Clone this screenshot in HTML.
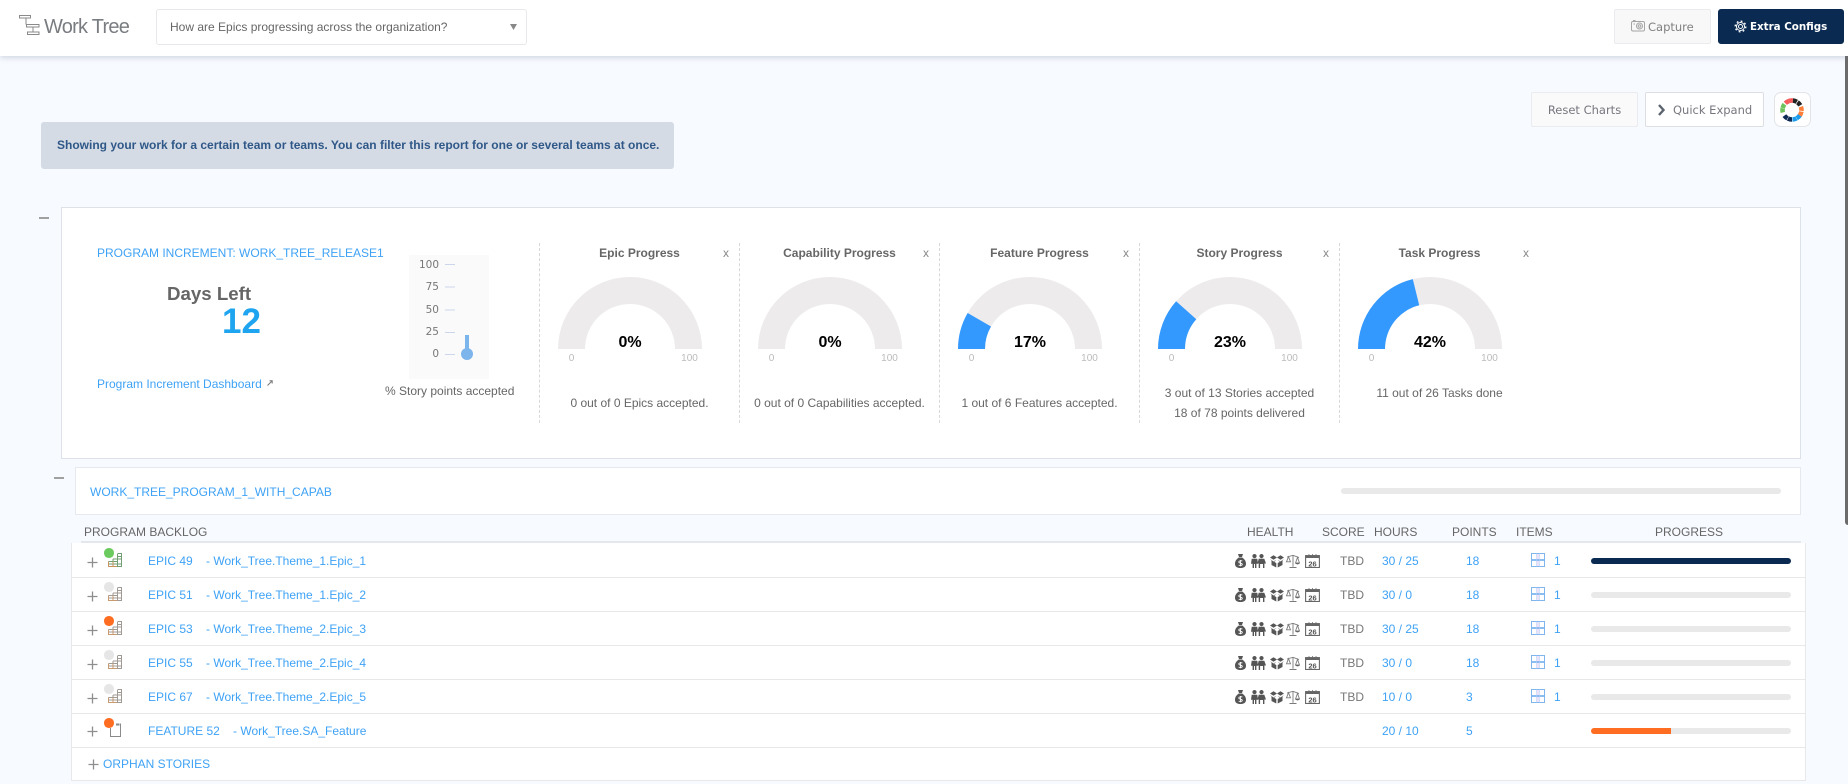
<!DOCTYPE html>
<html><head><meta charset="utf-8"><title>Work Tree</title>
<style>
html,body{margin:0;padding:0;width:1848px;height:784px;overflow:hidden;background:#f7faff;font-family:"Liberation Sans",sans-serif;font-size:12px;color:#666}
.a{position:absolute;white-space:nowrap;line-height:20px}
.b{position:absolute;box-sizing:border-box}
.l{color:#3ea2f5}
.c{transform:translateX(-50%)}
.btn{position:absolute;box-sizing:border-box;top:92px;height:35px;border:1px solid #e9ebee;border-radius:2px;background:#fafafa;font-family:"DejaVu Sans",sans-serif;font-size:11.5px;color:#77777f;line-height:35px}
.bar{position:absolute;left:1591px;width:200px;height:6px;border-radius:3px;background:#e9e9e9;overflow:hidden}
svg{position:absolute;overflow:visible}
.t{font-size:10px;color:#bbb}
.p{font-size:16px;font-weight:bold;color:#000}
.d{font-family:"DejaVu Sans",sans-serif;font-size:10.5px;color:#777}
</style></head><body>

<!-- header -->
<div class="b" style="left:0;top:0;width:1848px;height:56px;background:#fff;box-shadow:0 2px 5px rgba(120,130,150,.28);z-index:2"></div>
<div style="position:absolute;left:0;top:0;z-index:3">
<svg style="left:0;top:0" width="60" height="50" fill="none" stroke="#8a8a8a" stroke-width="1"><rect x="19.5" y="15.5" width="11" height="2.5"/><path d="M26 18V24.5M33 27V32"/><rect x="26.5" y="24.5" width="12.5" height="2.5"/><rect x="27.5" y="32" width="11.5" height="2.5"/></svg>
<div class="a" style="left:44px;top:15px;font-size:20px;line-height:24px;color:#797c80;letter-spacing:-.75px">Work Tree</div>
<div class="b" style="left:156px;top:9px;width:371px;height:36px;border:1px solid #e8e8ec;border-radius:3px;background:#fff"></div>
<div class="a" style="left:170px;top:17px;color:#666">How are Epics progressing across the organization?</div>
<svg style="left:510px;top:24px" width="7" height="6"><path d="M0 0H7L3.5 6Z" fill="#888"/></svg>
<div class="btn" style="left:1614px;top:9px;width:97px;color:#808080;background:#f8f8f8;padding-left:33px">Capture</div>
<svg style="left:1631px;top:19px" width="14" height="14" fill="none" stroke="#a5a5a5" stroke-width="1"><rect x=".5" y="2.5" width="13" height="9.5" rx="1.5"/><circle cx="8.5" cy="7" r="3"/><circle cx="8.5" cy="7" r="1.3"/><path d="M2 1.5H4.5M2.500 5h1.500"/></svg>
<div class="btn" style="left:1718px;top:9px;width:126px;background:#0a2a52;border-color:#0a2a52;border-radius:3px;color:#fff;font-weight:bold;font-size:10.3px;padding-left:31px">Extra Configs</div>
<svg style="left:1734px;top:20px" width="13" height="13" fill="none" stroke="#fff"><circle cx="6.5" cy="6.5" r="4"/><circle cx="6.5" cy="6.5" r="2"/><circle cx="6.5" cy="6.5" r="5.3" stroke-width="1.4" stroke-dasharray="1.8 2.36"/></svg>
</div>

<!-- scrollbar -->
<div class="b" style="left:1845px;top:56px;width:3px;height:469px;background:#6b6b6b;border-radius:0 0 0 3px"></div>

<!-- toolbar -->
<div class="btn" style="left:1531px;width:107px;text-align:center">Reset Charts</div>
<div class="btn" style="left:1645px;width:119px;background:#fff;border-color:#dcdee2;padding-left:27px">Quick Expand</div>
<svg style="left:1657px;top:104px" width="9" height="12" fill="none" stroke="#5c6470" stroke-width="2.4"><path d="M2 1L6.5 6L2 11"/></svg>
<div class="btn" style="left:1774px;width:37px;background:#fff;border-color:#e2e4e8;border-radius:7px"></div>
<svg style="left:1780px;top:98px" width="24" height="24" viewBox="-12 -12 24 24" fill="none" stroke-width="4.6">
<g stroke-dasharray="4.2 55.5">
<circle r="9.5" stroke="#222" transform="rotate(-85)"/><circle r="9.5" stroke="#222" transform="rotate(-55)"/><circle r="9.5" stroke="#ff7f3a" transform="rotate(-20)"/><circle r="9.5" stroke="#ff7f3a" transform="rotate(10)"/><circle r="9.5" stroke="#1c9cea" transform="rotate(35)"/><circle r="9.5" stroke="#1c9cea" transform="rotate(62)"/><circle r="9.5" stroke="#0d2c55" transform="rotate(90)"/><circle r="9.5" stroke="#0d2c55" transform="rotate(118)"/><circle r="9.5" stroke="#6cc35b" transform="rotate(165)"/><circle r="9.5" stroke="#6cc35b" transform="rotate(192)"/><circle r="9.5" stroke="#f65a5a" transform="rotate(225)"/><circle r="9.5" stroke="#f65a5a" transform="rotate(250)"/>
</g></svg>

<!-- alert -->
<div class="b" style="left:41px;top:122px;width:633px;height:47px;background:#d5dbe5;border-radius:3px"></div>
<div class="a" style="left:57px;top:135px;font-weight:bold;color:#2f5888;font-size:12px">Showing your work for a certain team or teams. You can filter this report for one or several teams at once.</div>

<!-- summary card -->
<div class="b" style="left:39px;top:217px;width:10px;height:2px;background:#a0a0a0"></div>
<div class="b" style="left:61px;top:207px;width:1740px;height:252px;background:#fff;border:1px solid #dde2e8"></div>
<div class="a l" style="left:97px;top:243px">PROGRAM INCREMENT: WORK_TREE_RELEASE1</div>
<div class="a" style="left:167px;top:284px;font-size:18.7px;font-weight:bold;color:#666">Days Left</div>
<div class="a" style="left:222px;top:312px;font-size:35px;font-weight:bold;color:#1fa5f0">12</div>
<div class="a l" style="left:97px;top:374px">Program Increment Dashboard</div>
<svg style="left:267px;top:380px" width="6" height="6" fill="none" stroke="#777"><path d="M.5 5.5L5 1M2.5 .8H5.200V3.500"/></svg>

<!-- thermometer -->
<div class="b" style="left:409px;top:255px;width:80px;height:124px;background:#fafafa"></div>
<div class="a d" style="right:1409px;top:255px">100</div>
<div class="a d" style="right:1409px;top:277px">75</div>
<div class="a d" style="right:1409px;top:300px">50</div>
<div class="a d" style="right:1409px;top:322px">25</div>
<div class="a d" style="right:1409px;top:344px">0</div>
<svg style="left:0;top:0" width="600" height="400"><path d="M445 264.5H455M445 287H455M445 310H455M445 332.500H455M445 354.500H455" stroke="#ccd6eb"/><rect x="465" y="335" width="4" height="18" fill="#7cb5ec"/><circle cx="467" cy="354" r="6" fill="#7cb5ec"/></svg>
<div class="a" style="left:385px;top:381px">% Story points accepted</div>

<!-- dividers -->
<div class="b" style="left:539px;top:243px;height:180px;border-left:1px dashed #d8d8d8"></div>
<div class="b" style="left:739px;top:243px;height:180px;border-left:1px dashed #d8d8d8"></div>
<div class="b" style="left:939px;top:243px;height:180px;border-left:1px dashed #d8d8d8"></div>
<div class="b" style="left:1139px;top:243px;height:180px;border-left:1px dashed #d8d8d8"></div>
<div class="b" style="left:1339px;top:243px;height:180px;border-left:1px dashed #d8d8d8"></div>

<!-- gauges -->
<svg style="left:0;top:0" width="1848" height="784">
<g fill="#edebec">
<path d="M558 349A72 72 0 0 1 702 349H675A45 45 0 0 0 585 349Z"/>
<path d="M758 349A72 72 0 0 1 902 349H875A45 45 0 0 0 785 349Z"/>
<path d="M958 349A72 72 0 0 1 1102 349H1075A45 45 0 0 0 985 349Z"/>
<path d="M1158 349A72 72 0 0 1 1302 349H1275A45 45 0 0 0 1185 349Z"/>
<path d="M1358 349A72 72 0 0 1 1502 349H1475A45 45 0 0 0 1385 349Z"/>
</g>
<g fill="#3399ff">
<path d="M958 349A72 72 0 0 1 967.65 313L991.03 326.5A45 45 0 0 0 985 349Z"/>
<path d="M1158 349A72 72 0 0 1 1176.1 301.3L1196.3 319.2A45 45 0 0 0 1185 349Z"/>
<path d="M1358 349A72 72 0 0 1 1412.8 279.1L1419.2 305.3A45 45 0 0 0 1385 349Z"/>
</g>
</svg>

<div class="a c" style="left:639.5px;top:243px;font-weight:bold">Epic Progress</div>
<div class="a c" style="left:839.5px;top:243px;font-weight:bold">Capability Progress</div>
<div class="a c" style="left:1039.5px;top:243px;font-weight:bold">Feature Progress</div>
<div class="a c" style="left:1239.5px;top:243px;font-weight:bold">Story Progress</div>
<div class="a c" style="left:1439.5px;top:243px;font-weight:bold">Task Progress</div>
<div class="a c" style="left:726px;top:243px;color:#888">x</div>
<div class="a c" style="left:926px;top:243px;color:#888">x</div>
<div class="a c" style="left:1126px;top:243px;color:#888">x</div>
<div class="a c" style="left:1326px;top:243px;color:#888">x</div>
<div class="a c" style="left:1526px;top:243px;color:#888">x</div>

<div class="a c p" style="left:630px;top:333px">0%</div>
<div class="a c p" style="left:830px;top:333px">0%</div>
<div class="a c p" style="left:1030px;top:333px">17%</div>
<div class="a c p" style="left:1230px;top:333px">23%</div>
<div class="a c p" style="left:1430px;top:333px">42%</div>

<div class="a c t" style="left:571.5px;top:348.5px">0</div><div class="a c t" style="left:689.5px;top:348.5px">100</div>
<div class="a c t" style="left:771.5px;top:348.5px">0</div><div class="a c t" style="left:889.5px;top:348.5px">100</div>
<div class="a c t" style="left:971.5px;top:348.5px">0</div><div class="a c t" style="left:1089.5px;top:348.5px">100</div>
<div class="a c t" style="left:1171.5px;top:348.5px">0</div><div class="a c t" style="left:1289.5px;top:348.5px">100</div>
<div class="a c t" style="left:1371.5px;top:348.5px">0</div><div class="a c t" style="left:1489.5px;top:348.5px">100</div>

<div class="a c" style="left:639.5px;top:393px">0 out of 0 Epics accepted.</div>
<div class="a c" style="left:839.5px;top:393px">0 out of 0 Capabilities accepted.</div>
<div class="a c" style="left:1039.5px;top:393px">1 out of 6 Features accepted.</div>
<div class="a c" style="left:1239.5px;top:383px">3 out of 13 Stories accepted</div>
<div class="a c" style="left:1239.5px;top:403px">18 of 78 points delivered</div>
<div class="a c" style="left:1439.5px;top:383px">11 out of 26 Tasks done</div>

<!-- program -->
<div class="b" style="left:54px;top:477px;width:10px;height:2px;background:#a0a0a0"></div>
<div class="b" style="left:75px;top:467px;width:1726px;height:48px;background:#fff;border:1px solid #e6e9ee"></div>
<div class="a l" style="left:90px;top:482px">WORK_TREE_PROGRAM_1_WITH_CAPAB</div>
<div class="b" style="left:1341px;top:488px;width:440px;height:6px;border-radius:3px;background:#e9e9e9"></div>

<div class="a" style="left:84px;top:522px">PROGRAM BACKLOG</div>
<div class="a" style="left:1247px;top:522px">HEALTH</div>
<div class="a" style="left:1322px;top:522px">SCORE</div>
<div class="a" style="left:1374px;top:522px">HOURS</div>
<div class="a" style="left:1452px;top:522px">POINTS</div>
<div class="a" style="left:1516px;top:522px">ITEMS</div>
<div class="a" style="left:1655px;top:522px">PROGRESS</div>
<div class="b" style="left:81px;top:541px;width:1720px;height:2px;background:#e4e7ec"></div>

<!-- rows box -->
<div class="b" style="left:71px;top:543px;width:1735px;height:238px;background:#fff;border:1px solid #e8e8ea;border-width:0 1px 1px 1px"></div>
<div class="b" style="left:72px;top:577px;width:1733px;height:1px;background:#e8e8e8"></div>
<div class="b" style="left:72px;top:611px;width:1733px;height:1px;background:#e8e8e8"></div>
<div class="b" style="left:72px;top:645px;width:1733px;height:1px;background:#e8e8e8"></div>
<div class="b" style="left:72px;top:679px;width:1733px;height:1px;background:#e8e8e8"></div>
<div class="b" style="left:72px;top:713px;width:1733px;height:1px;background:#e8e8e8"></div>
<div class="b" style="left:72px;top:747px;width:1733px;height:1px;background:#e8e8e8"></div>

<svg width="0" height="0" style="left:0;top:0">
<symbol id="plus" viewBox="0 0 11 11"><path d="M5.5 .5V10.5M.5 5.5H10.500" stroke="#8e8e8e" stroke-width="1.3" fill="none"/></symbol>
<symbol id="ep" viewBox="0 0 14 14"><g fill="none" stroke-width="1"><path d="M.5 8.5H9.5M.5 11H14M.5 13.5H14M.5 8.5V13.5M5 6V13.5M9.5 1V13.5M5 6H14M9.5 3.500H14M9.500 .5H13.500V13.500" stroke="#a09a94"/><path d="M.5 8.500V13.500H9M5 8.500V13.500" stroke="#c79a70"/></g></symbol>
<symbol id="epg" viewBox="0 0 14 14"><g fill="none" stroke-width="1"><path d="M.5 8.500H9.500M.5 11H14M.5 13.500H14M.5 8.500V13.500M5 6V13.500M9.500 1V13.500M5 6H14M9.500 3.500H14M9.500 .5H13.500V13.500" stroke="#6f9f73"/><path d="M.5 8.500V13.500H9M5 8.500V13.500" stroke="#c9935f"/></g></symbol>
<symbol id="hl" viewBox="0 0 85 14">
<g fill="#555"><path d="M3 0H8L7 3H4ZM3.800 3.500H7.200C10 5.500 11 7.500 11 9.700C11 12.500 9 14 5.500 14C2 14 0 12.500 0 9.700C0 7.500 1 5.500 3.800 3.500Z"/>
<path d="M19.500 0a2.100 2.100 0 1 1 -.01 0ZM26.500 0a2.100 2.100 0 1 1 -.01 0ZM16.700 4.700H22.300L23 9.800H21.400V14H20V10H19V14H17.600V9.800H16ZM23.700 4.700H29.300L31 9.500H29.400V14H28V10H25.100V14H23.700V9.500H22.500Z"/>
<path d="M35 3.500L38.500 1.300L42 3.500L38.500 5.800ZM49 3.500L45.500 1.300L42 3.500L45.500 5.800ZM36.500 6.500L41.300 9V13.500L36.500 11ZM47.500 6.500L42.700 9V13.500L47.500 11ZM35 5L38.500 7.500L41.300 5.800L38.500 8.600ZM49 5L45.500 7.500L42.700 5.800L45.500 8.600Z"/></g>
<path d="M7.300 7.200C6.700 6.500 3.800 6.500 3.800 8C3.800 9.500 7.300 8.900 7.300 10.400C7.300 11.700 4.500 11.700 3.700 10.900M5.500 6V12.300" fill="none" stroke="#fff" stroke-width=".9"/>
<g fill="none" stroke="#7a7a7a" stroke-width=".9"><path d="M58 1V12.700M54.500 13.500H61.500M52 3L58 1.300L64 3.600M53.500 2.600L51.500 7.800H55.500ZM62.500 3.400L60.500 9H64.500Z"/></g><path d="M60.500 9H64.500C64.500 10.800 60.500 10.800 60.500 9Z" fill="#666"/>
</symbol>
<symbol id="cal" viewBox="0 0 15 14"><rect x=".6" y="1.600" width="13.800" height="11.900" fill="#fff" stroke="#666" stroke-width="1.100"/><rect x=".6" y="1.600" width="13.800" height="2.400" fill="#666"/><path d="M4 .2V2.500M7.500 .2V2.500M11 .2V2.500" stroke="#666"/></symbol>
<symbol id="itm" viewBox="0 0 14 14"><path d="M7 0V14" stroke="#ddcff3" stroke-width="1.200"/><path d="M.5 .5H13.500V13.500H.5Z" fill="none" stroke="#7fb6f0"/><path d="M0 7H14" stroke="#7fb6f0" stroke-width="1.800"/><path d="M5.600 .5V13.500M8.400 .5V13.500" stroke="#b5cdf5" stroke-width=".6"/></symbol>
</svg>

<!-- row 1 -->
<svg style="left:87px;top:557px" width="11" height="11"><use href="#plus" width="11" height="11"/></svg>
<svg style="left:108px;top:553px" width="14" height="14"><use href="#epg" width="14" height="14"/></svg>
<div class="b" style="left:104px;top:548px;width:9.5px;height:9.5px;border-radius:50%;background:#6ccb5f"></div>
<div class="a l" style="left:148px;top:551px">EPIC 49</div><div class="a l" style="left:206px;top:551px">- Work_Tree.Theme_1.Epic_1</div>
<svg style="left:1235px;top:554px" width="85" height="14"><use href="#hl" width="85" height="14"/></svg>
<svg style="left:1305px;top:554px" width="15" height="14"><use href="#cal" width="15" height="14"/><text x="7.5" y="12.300" text-anchor="middle" font-size="7.5" font-weight="bold" fill="#555" font-family="Liberation Sans">26</text></svg>
<div class="a" style="left:1340px;top:551px;color:#777">TBD</div>
<div class="a l" style="left:1382px;top:551px">30 / 25</div>
<div class="a l" style="left:1466px;top:551px">18</div>
<svg style="left:1531px;top:553px" width="14" height="14"><use href="#itm" width="14" height="14"/></svg>
<div class="a l" style="left:1554px;top:551px">1</div>
<div class="bar" style="top:558px;background:#0a2a52"></div>

<!-- row 2 -->
<svg style="left:87px;top:591px" width="11" height="11"><use href="#plus" width="11" height="11"/></svg>
<svg style="left:108px;top:587px" width="14" height="14"><use href="#ep" width="14" height="14"/></svg>
<div class="b" style="left:104px;top:582px;width:9.5px;height:9.5px;border-radius:50%;background:#e6e6e6"></div>
<div class="a l" style="left:148px;top:585px">EPIC 51</div><div class="a l" style="left:206px;top:585px">- Work_Tree.Theme_1.Epic_2</div>
<svg style="left:1235px;top:588px" width="85" height="14"><use href="#hl" width="85" height="14"/></svg>
<svg style="left:1305px;top:588px" width="15" height="14"><use href="#cal" width="15" height="14"/><text x="7.5" y="12.300" text-anchor="middle" font-size="7.5" font-weight="bold" fill="#555" font-family="Liberation Sans">26</text></svg>
<div class="a" style="left:1340px;top:585px;color:#777">TBD</div>
<div class="a l" style="left:1382px;top:585px">30 / 0</div>
<div class="a l" style="left:1466px;top:585px">18</div>
<svg style="left:1531px;top:587px" width="14" height="14"><use href="#itm" width="14" height="14"/></svg>
<div class="a l" style="left:1554px;top:585px">1</div>
<div class="bar" style="top:592px"></div>

<!-- row 3 -->
<svg style="left:87px;top:625px" width="11" height="11"><use href="#plus" width="11" height="11"/></svg>
<svg style="left:108px;top:621px" width="14" height="14"><use href="#ep" width="14" height="14"/></svg>
<div class="b" style="left:104px;top:616px;width:9.5px;height:9.5px;border-radius:50%;background:#ff6d22"></div>
<div class="a l" style="left:148px;top:619px">EPIC 53</div><div class="a l" style="left:206px;top:619px">- Work_Tree.Theme_2.Epic_3</div>
<svg style="left:1235px;top:622px" width="85" height="14"><use href="#hl" width="85" height="14"/></svg>
<svg style="left:1305px;top:622px" width="15" height="14"><use href="#cal" width="15" height="14"/><text x="7.5" y="12.300" text-anchor="middle" font-size="7.5" font-weight="bold" fill="#555" font-family="Liberation Sans">26</text></svg>
<div class="a" style="left:1340px;top:619px;color:#777">TBD</div>
<div class="a l" style="left:1382px;top:619px">30 / 25</div>
<div class="a l" style="left:1466px;top:619px">18</div>
<svg style="left:1531px;top:621px" width="14" height="14"><use href="#itm" width="14" height="14"/></svg>
<div class="a l" style="left:1554px;top:619px">1</div>
<div class="bar" style="top:626px"></div>

<!-- row 4 -->
<svg style="left:87px;top:659px" width="11" height="11"><use href="#plus" width="11" height="11"/></svg>
<svg style="left:108px;top:655px" width="14" height="14"><use href="#ep" width="14" height="14"/></svg>
<div class="b" style="left:104px;top:650px;width:9.5px;height:9.5px;border-radius:50%;background:#e6e6e6"></div>
<div class="a l" style="left:148px;top:653px">EPIC 55</div><div class="a l" style="left:206px;top:653px">- Work_Tree.Theme_2.Epic_4</div>
<svg style="left:1235px;top:656px" width="85" height="14"><use href="#hl" width="85" height="14"/></svg>
<svg style="left:1305px;top:656px" width="15" height="14"><use href="#cal" width="15" height="14"/><text x="7.5" y="12.300" text-anchor="middle" font-size="7.5" font-weight="bold" fill="#555" font-family="Liberation Sans">26</text></svg>
<div class="a" style="left:1340px;top:653px;color:#777">TBD</div>
<div class="a l" style="left:1382px;top:653px">30 / 0</div>
<div class="a l" style="left:1466px;top:653px">18</div>
<svg style="left:1531px;top:655px" width="14" height="14"><use href="#itm" width="14" height="14"/></svg>
<div class="a l" style="left:1554px;top:653px">1</div>
<div class="bar" style="top:660px"></div>

<!-- row 5 -->
<svg style="left:87px;top:693px" width="11" height="11"><use href="#plus" width="11" height="11"/></svg>
<svg style="left:108px;top:689px" width="14" height="14"><use href="#ep" width="14" height="14"/></svg>
<div class="b" style="left:104px;top:684px;width:9.5px;height:9.5px;border-radius:50%;background:#e6e6e6"></div>
<div class="a l" style="left:148px;top:687px">EPIC 67</div><div class="a l" style="left:206px;top:687px">- Work_Tree.Theme_2.Epic_5</div>
<svg style="left:1235px;top:690px" width="85" height="14"><use href="#hl" width="85" height="14"/></svg>
<svg style="left:1305px;top:690px" width="15" height="14"><use href="#cal" width="15" height="14"/><text x="7.5" y="12.300" text-anchor="middle" font-size="7.5" font-weight="bold" fill="#555" font-family="Liberation Sans">26</text></svg>
<div class="a" style="left:1340px;top:687px;color:#777">TBD</div>
<div class="a l" style="left:1382px;top:687px">10 / 0</div>
<div class="a l" style="left:1466px;top:687px">3</div>
<svg style="left:1531px;top:689px" width="14" height="14"><use href="#itm" width="14" height="14"/></svg>
<div class="a l" style="left:1554px;top:687px">1</div>
<div class="bar" style="top:694px"></div>

<!-- row 6 -->
<svg style="left:87px;top:726px" width="11" height="11"><use href="#plus" width="11" height="11"/></svg>
<svg style="left:110px;top:723px" width="12" height="14" fill="none" stroke="#8a8a8a"><path d="M.5 5V13.500H10.500V.5"/><path d="M6 1.500H9.500" stroke-width="2"/></svg>
<div class="b" style="left:104px;top:718px;width:9.5px;height:9.5px;border-radius:50%;background:#ff6d22"></div>
<div class="a l" style="left:148px;top:721px">FEATURE 52</div><div class="a l" style="left:233px;top:721px">- Work_Tree.SA_Feature</div>
<div class="a l" style="left:1382px;top:721px">20 / 10</div>
<div class="a l" style="left:1466px;top:721px">5</div>
<div class="bar" style="top:728px"><div style="width:80px;height:6px;background:#ff6d22"></div></div>

<!-- row 7 -->
<svg style="left:88px;top:759px" width="11" height="11"><use href="#plus" width="11" height="11"/></svg>
<div class="a l" style="left:103px;top:753.5px">ORPHAN STORIES</div>

</body></html>
